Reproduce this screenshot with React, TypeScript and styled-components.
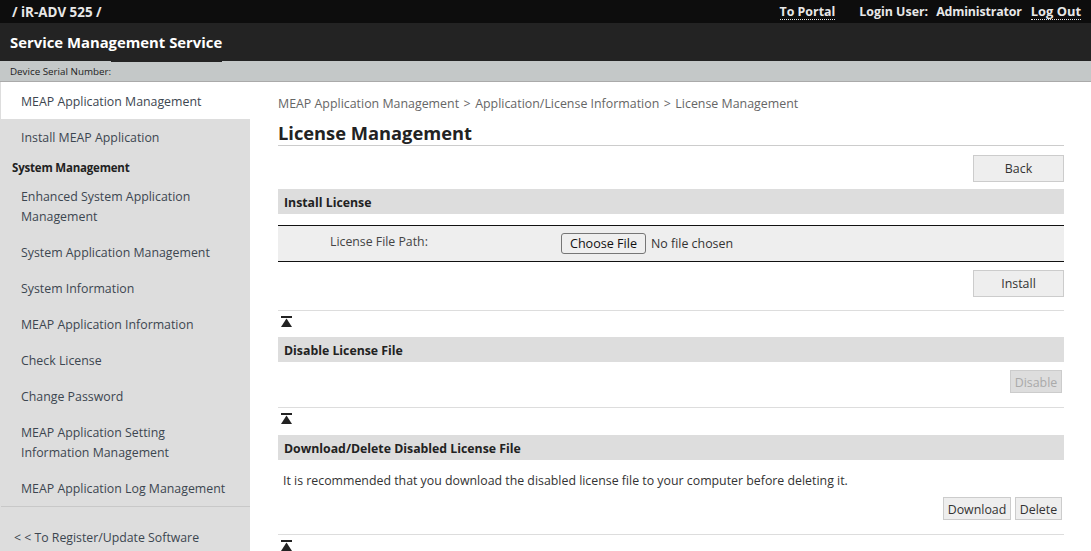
import styled, { createGlobalStyle } from 'styled-components'

const GlobalStyle = createGlobalStyle`
  html, body {
    margin: 0;
    height: 551px;
    overflow: hidden;
    background: #fff;
  }
  body {
    font-family: "Open Sans", "Noto Sans", "Liberation Sans", sans-serif;
    font-size: 13px;
    color: #333;
  }
`

const Page = styled.div`
  display: flex;
  flex-direction: column;
  height: 551px;
  overflow: hidden;
`

const TopBar = styled.div`
  display: flex;
  align-items: center;
  justify-content: space-between;
  height: 23px;
  padding: 0 10px 0 12px;
  background: #0d0d0d;
  color: #e8e8e8;
  font-size: 13.4px;
  font-weight: 700;
`

const TopRight = styled.div`
  display: flex;
  align-items: center;
  font-size: 12.4px;
`

const TopLink = styled.a`
  color: #e8e8e8;
  border-bottom: 1px dotted #e8e8e8;
  line-height: 15px;
  margin-left: ${props => props.$gap ?? 0}px;
  font-size: ${props => props.$size ?? 12.4}px;
`

const TopText = styled.span`
  margin-left: ${props => props.$gap ?? 0}px;
  letter-spacing: ${props => props.$tight ?? 0}px;
`

const TitleBar = styled.div`
  display: flex;
  align-items: center;
  height: 38px;
  padding-left: 10px;
  background: #232323;
  color: #fff;
  font-size: 14.85px;
  font-weight: 700;
`

const TitleText = styled.span`
  position: relative;

  &::after {
    content: '';
    position: absolute;
    left: 101px;
    right: 0;
    bottom: -10px;
    height: 1px;
    background: #232323;
  }
`

const SerialBar = styled.div`
  height: 20px;
  line-height: 21px;
  padding-left: 10px;
  background: #c4c8c8;
  border-bottom: 1px solid #aaa;
  font-size: 9.8px;
  color: #222;
`

const Body = styled.div`
  display: flex;
  flex: 1;
  min-height: 0;
`

const Sidebar = styled.nav`
  flex: none;
  width: 250px;
  background: #ddd;
  display: flex;
  flex-direction: column;
`

const NavItem = styled.div`
  padding: 8px 20px 8px 21px;
  line-height: 20px;
  color: #3c4650;
  font-size: 12.35px;
`

const ActiveNavItem = styled(NavItem)`
  padding: 10px 20px 7px 20px;
  margin-left: 1px;
  background: #fff;
`

const InstallNavItem = styled(NavItem)`
  padding: 9px 20px 7px 21px;
`

const NavHeading = styled.div`
  padding: 4px 12px 2px;
  line-height: 18px;
  font-size: 11.5px;
  letter-spacing: -0.2px;
  font-weight: 700;
  color: #222;
`

const NavBack = styled.div`
  margin-top: -1px;
  margin-left: 1px;
  border-top: 1px solid #c8c8c8;
  padding: 21px 13px 0;
  line-height: 20px;
  font-size: 12.3px;
  color: #3c4650;
`

const Main = styled.main`
  flex: 1;
  min-width: 0;
  padding: 12px 27px 0 28px;
`

const Breadcrumb = styled.div`
  line-height: 20px;
  font-size: 12.4px;
  color: #666;
`

const CrumbSep = styled.span`
  margin: 0 4.5px;
`

const PageTitle = styled.h1`
  margin: 7px 0 0;
  line-height: 24px;
  font-size: 18.3px;
  font-weight: 700;
  color: #222;
  border-bottom: 1px solid #ccc;
`

const ButtonRow = styled.div`
  display: flex;
  justify-content: flex-end;
  gap: 4px;
  padding-right: ${props => props.$inset ?? 0}px;
  margin-top: ${props => props.$top ?? 0}px;
`

const Button = styled.button`
  box-sizing: border-box;
  width: ${props => props.$width}px;
  height: ${props => props.$height ?? 27}px;
  padding: ${props => (props.$height ? 1 : 0)}px 0 0;
  background: ${props => (props.disabled ? '#ddd' : '#eee')};
  border: 1px solid #ccc;
  border-radius: 0;
  font-family: inherit;
  font-size: 12.4px;
  color: ${props => (props.disabled ? '#aaa' : '#333')};
`

const SectionHeader = styled.div`
  height: 25px;
  line-height: 27px;
  margin-top: ${props => props.$top ?? 0}px;
  padding-left: 6px;
  background: #ddd;
  color: #222;
  font-size: 12.3px;
  font-weight: 700;
`

const FormRow = styled.div`
  display: flex;
  height: 35px;
  margin-top: 11px;
  background: #eee;
  border-top: 1px solid #111;
  border-bottom: 1px solid #111;
`

const FormLabel = styled.div`
  flex: none;
  width: 283px;
  padding-left: 52px;
  box-sizing: border-box;
  line-height: 31px;
  font-size: 12.3px;
  color: #444;
`

const FileField = styled.div`
  display: flex;
  align-items: center;
  font-size: 12.4px;
  color: #333;
`

const ChooseFile = styled.button`
  box-sizing: border-box;
  width: 85px;
  height: 21px;
  padding: 0;
  margin-right: 5px;
  background: #efefef;
  border: 1px solid #767676;
  border-radius: 3px;
  font-family: inherit;
  font-size: 12.6px;
  color: #111;
`

const TopJump = styled.div`
  height: ${props => props.$height ?? 21}px;
  margin-top: ${props => props.$top ?? 0}px;
  padding: 5px 0 0 3px;
  border-top: 1px solid #ddd;
`

const JumpSvg = styled.svg`
  display: block;
`

const Notice = styled.p`
  margin: 11px 0 0;
  padding-left: 5px;
  line-height: 20px;
  font-size: 12.35px;
  color: #333;
`

const JumpIcon = () => (
  <JumpSvg width="11" height="11" viewBox="0 0 11 11">
    <rect x="0" y="0" width="11" height="2" fill="#222" />
    <path d="M5.5 2.5 L11 11 L0 11 Z" fill="#222" />
  </JumpSvg>
)

const navItems = [
  'Enhanced System Application Management',
  'System Application Management',
  'System Information',
  'MEAP Application Information',
  'Check License',
  'Change Password',
  'MEAP Application Setting Information Management',
  'MEAP Application Log Management',
]

export default function App() {
  return (
    <Page>
      <GlobalStyle />
      <TopBar>
        <span>/ iR-ADV 525 /</span>
        <TopRight>
          <TopLink>To Portal</TopLink>
          <TopText $gap={24}>Login User:</TopText>
          <TopText $gap={8} $tight={-0.15}>Administrator</TopText>
          <TopLink $gap={9} $size={12.9}>Log Out</TopLink>
        </TopRight>
      </TopBar>
      <TitleBar>
        <TitleText>Service Management Service</TitleText>
      </TitleBar>
      <SerialBar>Device Serial Number:</SerialBar>
      <Body>
        <Sidebar>
          <ActiveNavItem>MEAP Application Management</ActiveNavItem>
          <InstallNavItem>Install MEAP Application</InstallNavItem>
          <NavHeading>System Management</NavHeading>
          {navItems.map(item => (
            <NavItem key={item}>{item}</NavItem>
          ))}
          <NavBack>&lt; &lt; To Register/Update Software</NavBack>
        </Sidebar>
        <Main>
          <Breadcrumb>
            MEAP Application Management<CrumbSep>&gt;</CrumbSep>Application/License Information
            <CrumbSep>&gt;</CrumbSep>License Management
          </Breadcrumb>
          <PageTitle>License Management</PageTitle>
          <ButtonRow $top={9}>
            <Button $width={91}>Back</Button>
          </ButtonRow>
          <SectionHeader $top={7}>Install License</SectionHeader>
          <FormRow>
            <FormLabel>License File Path:</FormLabel>
            <FileField>
              <ChooseFile>Choose File</ChooseFile>
              No file chosen
            </FileField>
          </FormRow>
          <ButtonRow $top={8}>
            <Button $width={91}>Install</Button>
          </ButtonRow>
          <TopJump $top={13}>
            <JumpIcon />
          </TopJump>
          <SectionHeader>Disable License File</SectionHeader>
          <ButtonRow $top={8} $inset={2}>
            <Button $width={52} $height={23} disabled>
              Disable
            </Button>
          </ButtonRow>
          <TopJump $top={14} $height={22}>
            <JumpIcon />
          </TopJump>
          <SectionHeader>Download/Delete Disabled License File</SectionHeader>
          <Notice>It is recommended that you download the disabled license file to your computer before deleting it.</Notice>
          <ButtonRow $top={6} $inset={2}>
            <Button $width={68} $height={23}>
              Download
            </Button>
            <Button $width={47} $height={23}>
              Delete
            </Button>
          </ButtonRow>
          <TopJump $top={14}>
            <JumpIcon />
          </TopJump>
        </Main>
      </Body>
    </Page>
  )
}
